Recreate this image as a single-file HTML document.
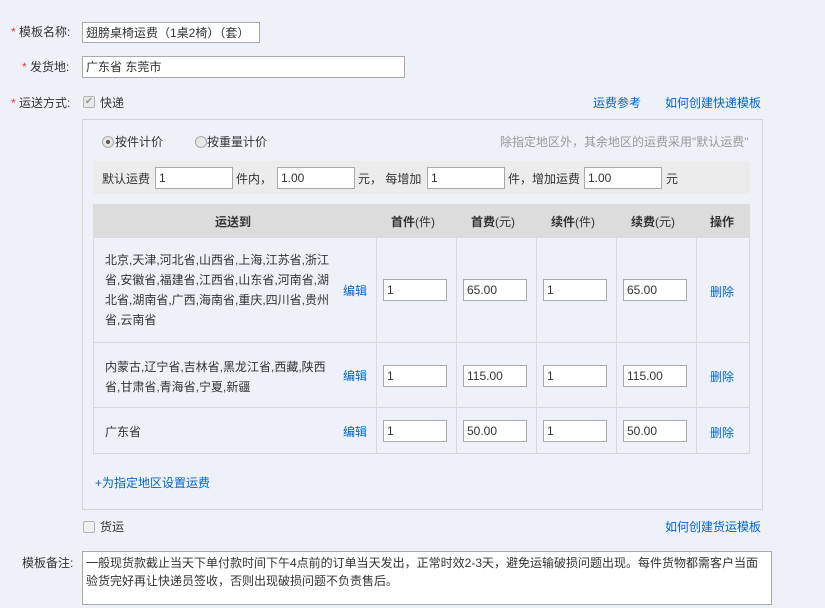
<!DOCTYPE html>
<html><head><meta charset="utf-8"><style>
*{margin:0;padding:0;box-sizing:border-box}
body{width:825px;height:608px;background:#eef1f8;font:12px "Liberation Sans","Noto Sans CJK SC",sans-serif;color:#333;position:relative;overflow:hidden}
.a{position:absolute;white-space:nowrap;line-height:16px}
.r{color:#e4393c}
.in{position:absolute;background:#fff;border:1px solid #a9a9a9;height:22px;line-height:20px;padding-left:3px;font-size:12px;color:#333;white-space:nowrap;overflow:hidden}
.lk{color:#0066cc}
.cb{position:absolute;width:12px;height:12px;border:1px solid #b5b5b5;border-radius:2px;background:#e8e8e8}
.rd{position:absolute;width:12px;height:12px;border:1px solid #aaa;border-radius:50%;background:#e6e6e6}
.vl{position:absolute;width:1px;background:#d9d9d9}
.hl{position:absolute;height:1px;background:#d9d9d9;left:93px;width:657px}
.th{position:absolute;font-weight:bold;top:214px;line-height:16px}
</style></head><body>
<div class="a" style="left:11px;top:24px"><span class="r">*</span> 模板名称:</div>
<div class="in" style="left:82px;top:22px;width:178px;height:21px">翅膀桌椅运费（1桌2椅）（套）</div>
<div class="a" style="left:22px;top:59px"><span class="r">*</span> 发货地:</div>
<div class="in" style="left:82px;top:56px;width:323px;height:22px">广东省 东莞市</div>
<div class="a" style="left:11px;top:95px"><span class="r">*</span> 运送方式:</div>
<div class="cb" style="left:83px;top:96px;color:#999;font-size:10px;line-height:10px;text-align:center">✔</div>
<div class="a" style="left:100px;top:95px">快递</div>
<div class="a lk" style="left:593px;top:95px">运费参考</div>
<div class="a lk" style="left:665px;top:95px">如何创建快递模板</div>

<div style="position:absolute;left:82px;top:119px;width:681px;height:391px;border:1px solid #d6d6d6;background:#eef1f8"></div>
<div class="rd" style="left:102px;top:136px"><div style="position:absolute;left:3px;top:3px;width:4px;height:4px;border-radius:50%;background:#555"></div></div>
<div class="a" style="left:115px;top:134px">按件计价</div>
<div class="rd" style="left:195px;top:136px"></div>
<div class="a" style="left:207px;top:134px">按重量计价</div>
<div class="a" style="left:500px;top:134px;color:#999">除指定地区外，其余地区的运费采用"默认运费"</div>

<div style="position:absolute;left:93px;top:161px;width:657px;height:33px;background:#ececec"></div>
<div class="a" style="left:102px;top:171px">默认运费</div>
<div class="in" style="left:155px;top:167px;width:78px">1</div>
<div class="a" style="left:236px;top:171px">件内，</div>
<div class="in" style="left:277px;top:167px;width:78px">1.00</div>
<div class="a" style="left:358px;top:171px">元， 每增加</div>
<div class="in" style="left:427px;top:167px;width:78px">1</div>
<div class="a" style="left:508px;top:171px">件，增加运费</div>
<div class="in" style="left:584px;top:167px;width:78px">1.00</div>
<div class="a" style="left:666px;top:171px">元</div>

<div style="position:absolute;left:93px;top:204px;width:657px;height:250px;background:#eef1f8;border:1px solid #d9d9d9"></div>
<div style="position:absolute;left:93px;top:204px;width:657px;height:34px;background:#dcdcdc"></div>
<div class="th" style="left:215px">运送到</div>
<div class="th" style="left:391px">首件<span style="font-weight:normal">(件)</span></div>
<div class="th" style="left:471px">首费<span style="font-weight:normal">(元)</span></div>
<div class="th" style="left:551px">续件<span style="font-weight:normal">(件)</span></div>
<div class="th" style="left:631px">续费<span style="font-weight:normal">(元)</span></div>
<div class="th" style="left:710px">操作</div>
<div class="vl" style="left:376px;top:238px;height:216px"></div>
<div class="vl" style="left:456px;top:238px;height:216px"></div>
<div class="vl" style="left:536px;top:238px;height:216px"></div>
<div class="vl" style="left:616px;top:238px;height:216px"></div>
<div class="vl" style="left:696px;top:238px;height:216px"></div>
<div class="hl" style="top:342px"></div>
<div class="hl" style="top:407px"></div>

<div class="a" style="left:105px;top:250px;line-height:20px;white-space:normal;width:235px">北京,天津,河北省,山西省,上海,江苏省,浙江省,安徽省,福建省,江西省,山东省,河南省,湖北省,湖南省,广西,海南省,重庆,四川省,贵州省,云南省</div>
<div class="a lk" style="left:343px;top:283px">编辑</div>
<div class="in" style="left:383px;top:279px;width:64px">1</div>
<div class="in" style="left:463px;top:279px;width:64px">65.00</div>
<div class="in" style="left:543px;top:279px;width:64px">1</div>
<div class="in" style="left:623px;top:279px;width:64px">65.00</div>
<div class="a lk" style="left:710px;top:284px">删除</div>

<div class="a" style="left:105px;top:357px;line-height:20px;white-space:normal;width:235px">内蒙古,辽宁省,吉林省,黑龙江省,西藏,陕西省,甘肃省,青海省,宁夏,新疆</div>
<div class="a lk" style="left:343px;top:368px">编辑</div>
<div class="in" style="left:383px;top:365px;width:64px">1</div>
<div class="in" style="left:463px;top:365px;width:64px">115.00</div>
<div class="in" style="left:543px;top:365px;width:64px">1</div>
<div class="in" style="left:623px;top:365px;width:64px">115.00</div>
<div class="a lk" style="left:710px;top:369px">删除</div>

<div class="a" style="left:105px;top:424px">广东省</div>
<div class="a lk" style="left:343px;top:424px">编辑</div>
<div class="in" style="left:383px;top:420px;width:64px">1</div>
<div class="in" style="left:463px;top:420px;width:64px">50.00</div>
<div class="in" style="left:543px;top:420px;width:64px">1</div>
<div class="in" style="left:623px;top:420px;width:64px">50.00</div>
<div class="a lk" style="left:710px;top:425px">删除</div>

<div class="a lk" style="left:95px;top:475px">+为指定地区设置运费</div>

<div class="cb" style="left:83px;top:521px;background:#f0f0f0"></div>
<div class="a" style="left:100px;top:519px">货运</div>
<div class="a lk" style="left:665px;top:519px">如何创建货运模板</div>

<div class="a" style="left:22px;top:555px">模板备注:</div>
<div style="position:absolute;left:82px;top:551px;width:690px;height:54px;background:#fff;border:1px solid #a9a9a9;padding:2px 3px;line-height:18px;font-size:12px">一般现货款截止当天下单付款时间下午4点前的订单当天发出，正常时效2-3天，避免运输破损问题出现。每件货物都需客户当面验货完好再让快递员签收，否则出现破损问题不负责售后。</div>
</body></html>
